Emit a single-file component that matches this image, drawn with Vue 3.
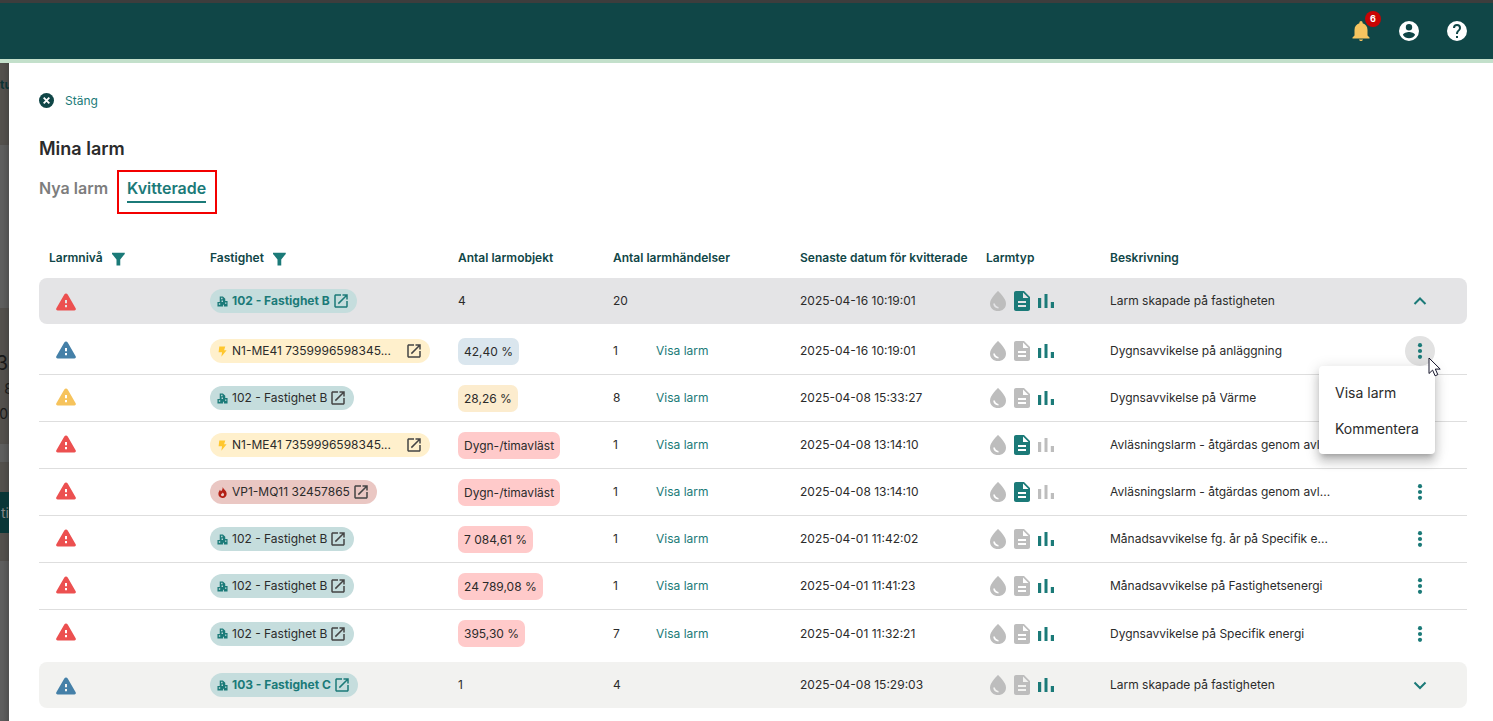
<script setup>
import { ref } from 'vue'

const icons = {
  alert: 'M10.3 4.5 2.35 18.2C1.7 19.4 2.4 20.5 3.7 20.5h16.6c1.3 0 2-1.1 1.35-2.3L13.7 4.5c-.75-1.3-2.65-1.3-3.4 0zM11 10h2v3.2h-2zM11 15h2v2.2h-2z',
  open: 'M19 19H5V5h7V3H5c-1.11 0-2 .9-2 2v14c0 1.1.89 2 2 2h14c1.1 0 2-.9 2-2v-7h-2v7zM14 3v2h3.59l-9.83 9.83 1.41 1.41L19 6.41V10h2V3h-7z',
  drop: 'M12 2S4 9.2 4 14.4C4 19 7.6 22 12 22s8-3 8-7.600C20 9.200 12 2 12 2zM12.500 19.500c-3 0-5.200-2-5.200-4.900h1.600c.2 2 1.600 3.200 3.600 3.300z',
  doc: 'M14 2H6c-1.100 0-2 .9-2 2v16c0 1.100.9 2 2 2h12c1.100 0 2-.9 2-2V8zM16 18H8v-2h8zM16 14H8v-2h8zM13 9V3.500L18.500 9z',
  bars: 'M4 9h3.200v10H4zM10.500 5h3v14h-3zM16.800 13H20v6h-3.200z',
  filter: 'M4 5h17v1.500L15 14v8h-5v-8L4 6.500z',
  house: 'M6 1h7l5 5v5h5v12h-8v-4h-2v4H1V13h5zM9 4v3h3V4zM10 10v3h3v-3zM4 16v3h3v-3zM17.500 14v3h3v-3z',
  bolt: 'M5 1h13l-2.500 8H21L9.500 23.500l1.500-10H3.500z',
  fire: 'M12.500 0c1 5 8.500 7.500 8.500 14.500A8.800 8.800 0 0 1 12 24a8.800 8.800 0 0 1-9-9c0-4.500 2.500-6.500 3.500-9 .8 1 1.500 2 1.700 3.500C11 8 12.500 5 12.500 0zM12 20c2 0 3.500-1.200 3.500-3.200S13.800 14 12.500 12c-1 2.500-4 3-4 5 0 1.800 1.500 3 3.500 3z'
}

const headers = [
  { text: 'Larmnivå', filter: true },
  { text: 'Fastighet', filter: true },
  { text: 'Antal larmobjekt' },
  { text: 'Antal larmhändelser' },
  { text: 'Senaste datum för kvitterade' },
  { text: 'Larmtyp' },
  { text: 'Beskrivning' }
]

const house = { kind: 'house', name: '102 - Fastighet B' }
const meter = { kind: 'bolt', name: 'N1-ME41 7359996598345...', wide: true }

const groups = ref([
  {
    open: true, level: 'red', name: '102 - Fastighet B', objects: 4, events: 20,
    date: '2025-04-16 10:19:01', types: ['doc', 'bars'], text: 'Larm skapade på fastigheten',
    rows: [
      { level: 'blue', chip: meter, value: '42,40 %', events: 1, date: '2025-04-16 10:19:01', types: ['bars'], text: 'Dygnsavvikelse på anläggning', menu: true },
      { level: 'yellow', chip: house, value: '28,26 %', events: 8, date: '2025-04-08 15:33:27', types: ['bars'], text: 'Dygnsavvikelse på Värme' },
      { level: 'red', chip: meter, value: 'Dygn-/timavläst', events: 1, date: '2025-04-08 13:14:10', types: ['doc'], text: 'Avläsningslarm - åtgärdas genom avl...' },
      { level: 'red', chip: { kind: 'fire', name: 'VP1-MQ11 32457865' }, value: 'Dygn-/timavläst', events: 1, date: '2025-04-08 13:14:10', types: ['doc'], text: 'Avläsningslarm - åtgärdas genom avl...' },
      { level: 'red', chip: house, value: '7 084,61 %', events: 1, date: '2025-04-01 11:42:02', types: ['bars'], text: 'Månadsavvikelse fg. år på Specifik e...' },
      { level: 'red', chip: house, value: '24 789,08 %', events: 1, date: '2025-04-01 11:41:23', types: ['bars'], text: 'Månadsavvikelse på Fastighetsenergi' },
      { level: 'red', chip: house, value: '395,30 %', events: 7, date: '2025-04-01 11:32:21', types: ['bars'], text: 'Dygnsavvikelse på Specifik energi' }
    ]
  },
  {
    open: false, level: 'blue', name: '103 - Fastighet C', objects: 1, events: 4,
    date: '2025-04-08 15:29:03', types: ['bars'], text: 'Larm skapade på fastigheten', rows: []
  }
])
const typeKinds = ['drop', 'doc', 'bars']
</script>

<template>
  <div class="page">
    <header class="topbar">
      <button class="top-btn" aria-label="Aviseringar">
        <svg class="bell" viewBox="0 0 24 24"><path d="M12 22c1.100 0 2-.7 2-1.500h-4c0 .8.900 1.500 2 1.500zM18.500 16.500V11c0-3.300-1.800-6-4.900-6.700v-.8a1.600 1.600 0 0 0-3.200 0v.8C7.300 5 5.500 7.700 5.500 11v5.500L3.500 18.500v1h17v-1z" /></svg>
        <span class="badge">6</span>
      </button>
      <button class="top-btn" aria-label="Konto">
        <svg viewBox="0 0 24 24"><path fill-rule="evenodd" d="M12 2a10 10 0 1 0 0 20 10 10 0 0 0 0-20zm0 3a3.200 3.200 0 1 1 0 6.400A3.200 3.200 0 0 1 12 5zm0 14.200a7.200 7.200 0 0 1-6-3.220c.03-1.990 4-3.080 6-3.080s5.970 1.090 6 3.080a7.200 7.200 0 0 1-6 3.220z" /></svg>
      </button>
      <button class="top-btn" aria-label="Hjälp">
        <svg viewBox="0 0 24 24"><path d="M12 2a10 10 0 1 0 0 20 10 10 0 0 0 0-20zm1 17h-2v-2h2zm2.070-7.750-.9.920C13.450 12.900 13 13.500 13 15h-2v-.5c0-1.100.45-2.100 1.170-2.830l1.240-1.260c.37-.36.590-.86.590-1.410a2 2 0 1 0-4 0H8a4 4 0 1 1 8 0c0 .88-.36 1.680-.93 2.250z" /></svg>
      </button>
    </header>

    <div class="body">
      <aside class="behind" aria-hidden="true">
        <div class="tile first"><b>tu</b></div>
        <div class="tile second"><strong>3</strong><span class="pair"><i>s</i> 8</span><span>0</span></div>
        <div class="tile third"><div class="cta">ti</div></div>
      </aside>

      <main class="panel">
        <button class="close">
          <svg viewBox="0 0 24 24"><circle cx="12" cy="12" r="12" /><path d="m7.500 7.500 9 9m0-9-9 9" /></svg>
          Stäng
        </button>
        <h1>Mina larm</h1>
        <nav class="tabs">
          <a href="#nya">Nya larm</a>
          <div class="marked"><a href="#kvitterade" class="active">Kvitterade</a></div>
        </nav>

        <table>
          <colgroup>
            <col class="c-level"><col class="c-place"><col class="c-objects"><col class="c-events">
            <col class="c-date"><col class="c-type"><col><col class="c-action">
          </colgroup>
          <thead>
            <tr>
              <th v-for="h in headers" :key="h.text">
                <span class="head">{{ h.text }}
                  <button v-if="h.filter" :aria-label="'Filtrera ' + h.text"><svg viewBox="0 0 24 24"><path :d="icons.filter" /></svg></button>
                </span>
              </th>
              <th></th>
            </tr>
          </thead>
          <tbody v-for="g in groups" :key="g.name">
            <tr class="group" :class="{ open: g.open }">
              <td><svg class="alert" :class="g.level" viewBox="0 0 24 24"><path fill-rule="evenodd" :d="icons.alert" /></svg></td>
              <td>
                <a href="#fastighet" class="chip house">
                  <svg class="kind" viewBox="0 0 24 24"><path fill-rule="evenodd" :d="icons.house" /></svg>
                  <span>{{ g.name }}</span>
                  <svg class="launch" viewBox="0 0 24 24"><path :d="icons.open" /></svg>
                </a>
              </td>
              <td>{{ g.objects }}</td>
              <td>{{ g.events }}</td>
              <td>{{ g.date }}</td>
              <td>
                <div class="types"><svg v-for="t in typeKinds" :key="t" :class="{ on: g.types.includes(t) }" viewBox="0 0 24 24"><path fill-rule="evenodd" :d="icons[t]" /></svg></div>
              </td>
              <td>{{ g.text }}</td>
              <td>
                <div class="action">
                  <button class="round" :aria-label="g.open ? 'Dölj' : 'Visa'" @click="g.open = !g.open">
                    <svg class="chevron" viewBox="0 0 24 24"><path :d="g.open ? 'm6.500 15 5.500-5.500 5.500 5.500' : 'm6.500 9.500 5.500 5.500 5.500-5.500'" /></svg>
                  </button>
                </div>
              </td>
            </tr>
            <template v-if="g.open">
              <tr v-for="(r, i) in g.rows" :key="i" class="child">
                <td><svg class="alert" :class="r.level" viewBox="0 0 24 24"><path fill-rule="evenodd" :d="icons.alert" /></svg></td>
                <td>
                  <a href="#anlaggning" class="chip" :class="[r.chip.kind, { wide: r.chip.wide }]">
                    <svg class="kind" viewBox="0 0 24 24"><path fill-rule="evenodd" :d="icons[r.chip.kind]" /></svg>
                    <span>{{ r.chip.name }}</span>
                    <svg class="launch" viewBox="0 0 24 24"><path :d="icons.open" /></svg>
                  </a>
                </td>
                <td><span class="value" :class="r.level">{{ r.value }}</span></td>
                <td><div class="events"><span>{{ r.events }}</span><a href="#larm">Visa larm</a></div></td>
                <td>{{ r.date }}</td>
                <td>
                  <div class="types"><svg v-for="t in typeKinds" :key="t" :class="{ on: r.types.includes(t) }" viewBox="0 0 24 24"><path fill-rule="evenodd" :d="icons[t]" /></svg></div>
                </td>
                <td>{{ r.text }}</td>
                <td>
                  <div class="action">
                    <div class="anchor">
                      <button class="round" :class="{ hover: r.menu }" aria-label="Fler val">
                        <svg viewBox="0 0 24 24"><circle cx="12" cy="5" r="2.500" /><circle cx="12" cy="12" r="2.500" /><circle cx="12" cy="19" r="2.500" /></svg>
                      </button>
                      <div v-if="r.menu" class="menu" role="menu">
                        <button role="menuitem">Visa larm</button>
                        <button role="menuitem">Kommentera</button>
                      </div>
                      <svg v-if="r.menu" class="cursor" viewBox="0 0 14 20"><path d="M1 1v15.500l3.600-3.400 2.500 5.700 2.700-1.200-2.500-5.500h4.900z" /></svg>
                    </div>
                  </div>
                </td>
              </tr>
            </template>
          </tbody>
        </table>
      </main>
    </div>
  </div>
</template>

<style>
body { margin: 0; overflow: hidden; }
</style>

<style scoped>
.page {
  height: 100vh;
  display: flex;
  flex-direction: column;
  font: 12px/20px Inter, "Liberation Sans", sans-serif;
  color: #2b2b2b;
  background: #fff;
}
* { box-sizing: border-box; }
button { border: 0; padding: 0; background: none; font: inherit; color: inherit; cursor: pointer; }
a { text-decoration: none; color: #1b7a78; }
svg { display: block; fill: currentColor; flex: none; }

.topbar {
  flex: none;
  height: 63px;
  border-top: 3px solid #3d3d3d;
  border-bottom: 4px solid #c3e0cb;
  background: #104647;
  display: flex;
  justify-content: flex-end;
  align-items: center;
  gap: 24px;
  padding-right: 24px;
  color: #fff;
}
.top-btn { position: relative; width: 24px; height: 24px; }
.top-btn svg { width: 24px; height: 24px; }
.top-btn .bell { color: #f6c560; }
.badge {
  position: absolute;
  left: 16px;
  top: -8px;
  width: 16px;
  height: 16px;
  border-radius: 50%;
  background: #c80404;
  font: 700 9px/16px Inter, sans-serif;
  text-align: center;
}

.body { flex: 1; min-height: 0; display: flex; }
.behind {
  flex: none;
  width: 9px;
  overflow: hidden;
  background: #5f5f5f;
  box-shadow: inset -6px 0 6px -4px #4a4a4a;
  color: #181818;
}
.tile { background: #55524e; box-shadow: inset -6px 0 6px -4px #444240; display: flex; flex-direction: column; align-items: flex-end; }
.tile i { font-style: normal; color: #1c4a73; }
.first { height: 82px; padding-top: 12px; align-items: flex-start; }
.first b { color: #0c3334; }
.second { height: 136px; margin-top: 163px; padding: 42px 1px 0 0; }
.second strong { font: 400 20px/26px Inter, sans-serif; }
.second span { font-size: 14px; line-height: 25px; white-space: nowrap; }
.second .pair { margin-right: -5px; }
.third { height: 99px; margin-top: 18px; padding-top: 30px; align-items: stretch; }
.cta { height: 41px; background: #093637; color: #858585; line-height: 41px; font-size: 14px; text-align: right; }

.panel { flex: 1; min-width: 0; padding: 27px 26px 0 30px; }
.close { display: flex; align-items: center; gap: 11px; color: #1b7a78; height: 21px; }
.close svg { width: 15px; height: 15px; color: #104647; }
.close path { stroke: #fff; stroke-width: 3; }
h1 { margin: 26px 0 0; font-size: 18px; line-height: 24px; font-weight: 600; }
.tabs { display: flex; align-items: flex-start; gap: 9px; margin-top: 9px; font-size: 16px; line-height: 22px; font-weight: 600; }
.tabs a { color: #7d7d7d; margin-top: 7px; }
.marked { border: 2px solid #f30000; padding: 5px 9px 9px 8px; }
.tabs .active { display: block; margin: 0; height: 26px; border-bottom: 2px solid #1b7a78; color: #1b7a78; }

table { width: 100%; margin-top: 24px; table-layout: fixed; border-spacing: 0; }
.c-level { width: 161px; }
.c-place { width: 248px; }
.c-objects { width: 155px; }
.c-events { width: 187px; }
.c-date { width: 186px; }
.c-type { width: 124px; }
.c-action { width: 94px; }
th { height: 40px; padding: 0 0 0 10px; text-align: left; font-weight: 600; color: #104647; white-space: nowrap; }
.head { display: flex; align-items: center; gap: 6px; }
.head svg { width: 18px; height: 18px; color: #1b7a78; }
td { padding: 0 0 0 10px; white-space: nowrap; vertical-align: middle; }
td:last-child { padding-left: 0; }
.group td { height: 46px; background: #f2f2f0; }
.group.open td { background: #e4e4e6; }
.group td:first-child { border-radius: 8px 0 0 8px; padding-top: 2px; }
.group td:last-child { border-radius: 0 8px 8px 0; }
.child td { height: 47px; border-bottom: 1px solid #dedede; }
.group + .child td { height: 51px; padding-top: 4px; }
.child:last-child td { height: 52px; padding-bottom: 5px; border-bottom: 0; }

.alert { width: 24px; height: 24px; margin-left: 5px; }
.child .alert { margin-bottom: 3px; }
.alert.red { color: #ec5050; }
.alert.blue { color: #4580a8; }
.alert.yellow { color: #f6c35c; }

.chip { display: flex; align-items: center; width: fit-content; height: 24px; padding: 0 7px; border-radius: 12px; color: #2b2b2b; }
.chip .kind { width: 11px; height: 11px; margin-right: 4px; }
.chip .launch { width: 18px; height: 18px; margin-left: 2px; color: #444; }
.chip.wide span { min-width: 171px; }
.chip.house { background: #c5dddd; }
.chip.bolt { background: #fff0cc; }
.chip.fire { background: #eac7c3; }
.chip.house .kind { color: #1b7a78; }
.chip.bolt .kind { color: #ffc72e; }
.chip.fire .kind { color: #b32015; }
.group .chip { font-weight: 700; }
.group .chip, .group .launch { color: #1b7a78; }

.value { display: inline-block; height: 27px; line-height: 27px; padding: 0 6px; border-radius: 7px; }
.value.red { background: #ffcaca; }
.value.blue { background: #dae6ee; }
.value.yellow { background: #fcecce; }
.events { display: flex; }
.events span { width: 43px; }
.types { display: flex; }
.types svg { width: 24px; height: 24px; color: #bdbdbd; }
.types .on { color: #1b7a78; }

.action { display: flex; justify-content: center; }
.anchor { position: relative; }
.round { width: 30px; height: 30px; border-radius: 50%; display: flex; align-items: center; justify-content: center; color: #1b7a78; }
.round svg { width: 20px; height: 20px; }
.round.hover { background: #e2e2e2; }
.round .chevron { width: 24px; height: 24px; fill: none; stroke: currentColor; stroke-width: 2; }
.menu {
  position: absolute;
  z-index: 1;
  top: 30px;
  right: 0;
  width: 116px;
  padding: 9px 0 7px;
  border-radius: 4px;
  background: #fff;
  box-shadow: 0 5px 5px -3px rgba(0,0,0,.2), 0 8px 10px 1px rgba(0,0,0,.14), 0 3px 14px 2px rgba(0,0,0,.12);
}
.menu button { display: block; width: 100%; padding-left: 16px; height: 36px; font-size: 14px; text-align: left; }
.cursor { position: absolute; z-index: 2; left: 23px; top: 21px; width: 14px; height: 20px; fill: #fff; stroke: #15152b; stroke-width: 1; }
</style>
